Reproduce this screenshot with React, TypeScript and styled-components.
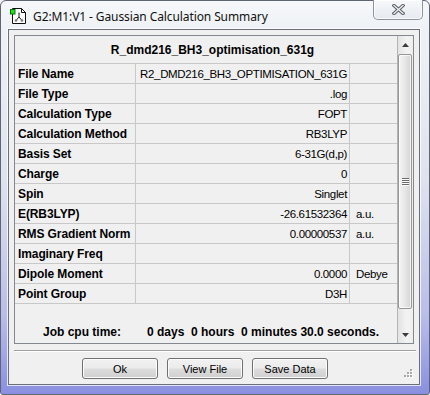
import React from 'react';
import styled, { createGlobalStyle } from 'styled-components';

const GlobalStyle = createGlobalStyle`
  html, body { margin: 0; padding: 0; background: #f4f4f8; }
  body { font-family: "Liberation Sans", Arial, sans-serif; color: #000; }
  * { box-sizing: border-box; }
`;

const Window = styled.div`
  width: 430px;
  height: 395px;
  display: flex;
  flex-direction: column;
  border: 1px solid #5f6572;
  border-radius: 6px 6px 3px 3px;
  padding: 0 9px 9px 7px;
  background: linear-gradient(
    to bottom,
    #f6f8fb 0px,
    #eef1f5 30px,
    #dfe3ee 45%,
    #b9bde9 80%,
    #8a8fe0 100%
  );
`;

const TitleBar = styled.div`
  height: 28px;
  display: flex;
  align-items: center;
  padding-left: 2px;
  gap: 6px;
`;

const Title = styled.span`
  font-family: "Noto Sans", "Open Sans", sans-serif;
  font-size: 12px;
  letter-spacing: -0.1px;
  color: #111;
  padding-top: 2px;
`;

const CloseButton = styled.div`
  margin-left: auto;
  margin-right: -3px;
  align-self: flex-start;
  margin-top: -1px;
  width: 50px;
  height: 20px;
  border: 1px solid #8d939b;
  border-top: none;
  border-radius: 0 0 5px 5px;
  background: linear-gradient(to bottom, #f7f9fb, #e6e9ee);
  box-shadow: inset 0 0 0 1px rgba(255, 255, 255, 0.8);
  display: flex;
  align-items: center;
  justify-content: center;
`;

const Client = styled.div`
  position: relative;
  flex: 1;
  border: 1px solid #6a707a;
  box-shadow: 0 0 0 1px rgba(255, 255, 255, 0.75);
  background: #f0f0f0;
  padding: 5px 5px 0 5px;
  display: flex;
  flex-direction: column;
`;

const Panel = styled.div`
  height: 309px;
  border: 1px solid #828790;
  display: flex;
`;

const TableArea = styled.div`
  flex: 1;
  display: flex;
  flex-direction: column;
`;

const Header = styled.div`
  height: 28px;
  border-bottom: 1px solid #c8c8c8;
  display: flex;
  align-items: center;
  justify-content: center;
  padding-left: 13px;
  font-weight: bold;
  font-size: 12px;
`;

const Grid = styled.div`
  display: grid;
  grid-template-columns: 121px 214px 1fr;
`;

const Cell = styled.div<{ $kind: 'label' | 'value' | 'unit' }>`
  height: 20px;
  border-bottom: 1px solid #c8c8c8;
  border-right: ${(p) => (p.$kind === 'unit' ? 'none' : '1px solid #c8c8c8')};
  display: flex;
  align-items: center;
  white-space: nowrap;
  overflow: hidden;
  justify-content: ${(p) => (p.$kind === 'value' ? 'flex-end' : 'flex-start')};
  padding: ${(p) =>
    p.$kind === 'label' ? '0 0 0 3px' : p.$kind === 'value' ? '0 2px 0 0' : '0 0 0 6px'};
  font-weight: ${(p) => (p.$kind === 'label' ? 'bold' : 'normal')};
  font-size: ${(p) => (p.$kind === 'label' ? '12px' : '11.5px')};
  letter-spacing: ${(p) => (p.$kind === 'label' ? '-0.1px' : '-0.35px')};
`;

const CpuLine = styled.div`
  flex: 1;
  display: flex;
  align-items: flex-end;
  padding: 0 0 4px 28px;
  font-weight: bold;
  font-size: 12px;
  white-space: pre;
`;

const CpuLabel = styled.span`
  width: 104px;
`;

const ScrollBar = styled.div`
  width: 16px;
  border-left: 1px solid #b4b4b4;
  display: flex;
  flex-direction: column;
  background: linear-gradient(to right, #e3e3e3, #f3f3f3 60%, #eeeeee);
`;

const ArrowButton = styled.div<{ $h: number }>`
  height: ${(p) => p.$h}px;
  display: flex;
  align-items: center;
  justify-content: center;
`;

const Thumb = styled.div`
  height: 255px;
  margin: 0 1px 0 0;
  border: 1px solid #969696;
  border-radius: 2px;
  background: linear-gradient(to right, #f4f4f4 0%, #e8e8e8 45%, #d4d4d4 100%);
  box-shadow: inset 0 0 0 1px rgba(255, 255, 255, 0.7);
  display: flex;
  align-items: center;
  justify-content: center;
`;

const Track = styled.div`
  flex: 1;
`;

const Separator = styled.div`
  margin-top: 6px;
  margin-right: -2px;
  height: 2px;
  border-top: 1px solid #a0a0a0;
  border-bottom: 1px solid #ffffff;
`;

const ButtonRow = styled.div`
  margin-top: 6px;
  display: flex;
  gap: 9px;
  padding-left: 68px;
`;

const Button = styled.div`
  width: 76px;
  height: 21px;
  border: 1px solid #707070;
  border-radius: 3px;
  background: linear-gradient(to bottom, #f2f2f2 0%, #ebebeb 48%, #dddddd 52%, #cfcfcf 100%);
  box-shadow: inset 0 0 0 1px #fcfcfc;
  display: flex;
  align-items: center;
  justify-content: center;
  font-size: 11px;
  color: #000;
`;

const Grip = styled.div`
  position: absolute;
  right: 6px;
  bottom: 6px;
  width: 9px;
  height: 9px;
  display: flex;
`;

const rows: [string, string, string][] = [
  ['File Name', 'R2_DMD216_BH3_OPTIMISATION_631G', ''],
  ['File Type', '.log', ''],
  ['Calculation Type', 'FOPT', ''],
  ['Calculation Method', 'RB3LYP', ''],
  ['Basis Set', '6-31G(d,p)', ''],
  ['Charge', '0', ''],
  ['Spin', 'Singlet', ''],
  ['E(RB3LYP)', '-26.61532364', 'a.u.'],
  ['RMS Gradient Norm', '0.00000537', 'a.u.'],
  ['Imaginary Freq', '', ''],
  ['Dipole Moment', '0.0000', 'Debye'],
  ['Point Group', 'D3H', ''],
];

const AppIcon = () => (
  <svg width="17" height="18" viewBox="0 0 17 18">
    <path d="M2.5 2.5 H11.5 L15.5 6.5 V17.5 H2.5 Z" fill="#fff" stroke="#111" />
    <path d="M11.5 2.5 V6.5 H15.5" fill="none" stroke="#111" />
    <path d="M9 7.5 V11 M9 11 L6 14.5 M9 11 L12 14.5" stroke="#222" strokeWidth="1" fill="none" />
    <circle cx="9" cy="7.5" r="1.1" fill="#7a7a7a" />
    <circle cx="6" cy="14.5" r="1.3" fill="#7a7a7a" />
    <circle cx="12" cy="14.5" r="1.3" fill="#7a7a7a" />
    <rect x="0.5" y="3.5" width="4.5" height="4.5" fill="#22dd22" stroke="#087008" />
  </svg>
);

const CloseIcon = () => (
  <svg width="13" height="11" viewBox="0 0 13 11">
    <path d="M2 1.5 L11 9.5 M11 1.5 L2 9.5" stroke="#5b6068" strokeWidth="3.4" strokeLinecap="square" />
    <path d="M2 1.5 L11 9.5 M11 1.5 L2 9.5" stroke="#eef0f3" strokeWidth="1.3" strokeLinecap="square" />
  </svg>
);

const UpArrow = () => (
  <svg width="7" height="4" viewBox="0 0 7 4">
    <polygon points="3.5,0 7,4 0,4" fill="#3c3c3c" />
  </svg>
);

const DownArrow = () => (
  <svg width="7" height="4" viewBox="0 0 7 4">
    <polygon points="0,0 7,0 3.5,4" fill="#3c3c3c" />
  </svg>
);

const GripLines = () => (
  <svg width="7" height="8" viewBox="0 0 7 8">
    {[0, 2, 4, 6].map((y) => (
      <g key={y}>
        <rect x="0" y={y} width="7" height="1" fill="#6b6b6b" />
        <rect x="0" y={y + 1} width="7" height="1" fill="#fafafa" />
      </g>
    ))}
  </svg>
);

const GripDots = () => (
  <svg width="9" height="9" viewBox="0 0 9 9">
    {[
      [6, 0],
      [3, 3],
      [6, 3],
      [0, 6],
      [3, 6],
      [6, 6],
    ].map(([x, y]) => (
      <g key={`${x}-${y}`}>
        <rect x={x + 1} y={y + 1} width="2" height="2" fill="#ffffff" />
        <rect x={x} y={y} width="2" height="2" fill="#a8a8a8" />
      </g>
    ))}
  </svg>
);

export default function App() {
  return (
    <>
      <GlobalStyle />
      <Window>
        <TitleBar>
          <AppIcon />
          <Title>G2:M1:V1 - Gaussian Calculation Summary</Title>
          <CloseButton>
            <CloseIcon />
          </CloseButton>
        </TitleBar>
        <Client>
          <Panel>
            <TableArea>
              <Header>R_dmd216_BH3_optimisation_631g</Header>
              <Grid>
                {rows.map(([label, value, unit]) => (
                  <React.Fragment key={label}>
                    <Cell $kind="label">{label}</Cell>
                    <Cell $kind="value">{value}</Cell>
                    <Cell $kind="unit">{unit}</Cell>
                  </React.Fragment>
                ))}
              </Grid>
              <CpuLine>
                <CpuLabel>Job cpu time:</CpuLabel>
                <span>{'0 days  0 hours  0 minutes 30.0 seconds.'}</span>
              </CpuLine>
            </TableArea>
            <ScrollBar>
              <ArrowButton $h={18}>
                <UpArrow />
              </ArrowButton>
              <Thumb>
                <GripLines />
              </Thumb>
              <Track />
              <ArrowButton $h={17}>
                <DownArrow />
              </ArrowButton>
            </ScrollBar>
          </Panel>
          <Separator />
          <ButtonRow>
            <Button>Ok</Button>
            <Button>View File</Button>
            <Button>Save Data</Button>
          </ButtonRow>
          <Grip>
            <GripDots />
          </Grip>
        </Client>
      </Window>
    </>
  );
}
